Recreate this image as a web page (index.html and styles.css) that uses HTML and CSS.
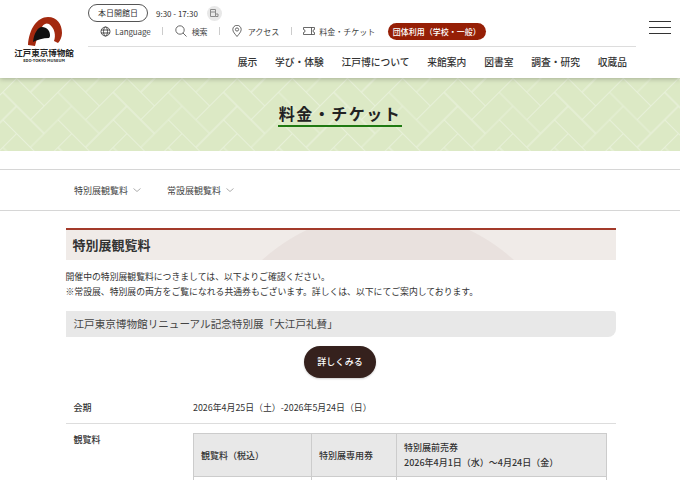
FILE: index.html
```html
<!DOCTYPE html>
<html lang="ja">
  <head>
    <meta charset="UTF-8" />
    <meta name="viewport" content="width=device-width, initial-scale=1.0" />
    <title>料金・チケット</title>
    <link rel="stylesheet" href="styles.css">
  </head>
  <body>
    <header class="site-header">
      <a class="logo">
        <svg class="logo-mark" width="36" height="30" viewBox="0 0 36 30">
          <path d="M1 29C2 13 10 1 21 1C30 1 35 8 35 17C35 21 33 25 31 27L27 25C29 20 28 12 22 8C16 5 12 14 8 30Z" fill="#a3290f" />
          <path d="M6 26C7 17 11 11 15 11C20 11 23 15 23 19C23 20 23 21 22 22C16 22 10 24 6 26Z" fill="#111" />
        </svg>
        <span class="logo-name">江戸東京博物館</span>
        <span class="logo-en">EDO-TOKYO MUSEUM</span>
      </a>
      <div class="header-main">
        <div class="status-row">
          <span class="open-pill">本日開館日</span>
          <span class="open-hours">9:30 - 17:30</span>
          <span class="calendar-icon">
            <svg width="10" height="10" viewBox="0 0 10 10" fill="none" stroke="#8a8a8a" stroke-width="1">
              <path d="M1.5 1.5h5v7h-5zM1.5 4h5M6.5 6h2.5v2.5h-2.5" />
            </svg>
          </span>
        </div>
        <div class="util-row">
          <a class="util-link util-en">
            <svg width="11" height="11" viewBox="0 0 11 11" fill="none" stroke="#333" stroke-width=".8">
              <circle cx="5.5" cy="5.5" r="4.5" />
              <ellipse cx="5.5" cy="5.5" rx="2" ry="4.5" />
              <path d="M1 4h9M1 7h9" />
            </svg>
            Language
          </a>
          <span class="util-sep"></span>
          <a class="util-link">
            <svg width="12" height="12" viewBox="0 0 12 12" fill="none" stroke="#444" stroke-width=".8">
              <circle cx="5" cy="5" r="4.2" />
              <path d="M8 8l3.5 3.5" />
            </svg>
            検索
          </a>
          <span class="util-sep"></span>
          <a class="util-link">
            <svg width="11" height="12" viewBox="0 0 11 12" fill="none" stroke="#444" stroke-width=".8">
              <path d="M5 11.5C3 9 .8 6.8.8 4.5a4.2 4.2 0 0 1 8.4 0C9.2 6.8 7 9 5 11.5z" />
              <circle cx="5" cy="4.5" r="1.6" />
            </svg>
            アクセス
          </a>
          <span class="util-sep"></span>
          <a class="util-link util-ticket">
            <svg width="12" height="8" viewBox="0 0 12 8" fill="none" stroke="#444" stroke-width=".8">
              <path d="M.5.5h11v2a1.5 1.5 0 0 0 0 3v2H.5v-2a1.5 1.5 0 0 0 0-3z" />
              <path d="M8.5.5v7" />
            </svg>
            料金・チケット
          </a>
          <a class="group-pill">団体利用（学校・一般）</a>
        </div>
        <nav class="global-nav">
          <a>展示</a>
          <a>学び・体験</a>
          <a>江戸博について</a>
          <a>来館案内</a>
          <a>図書室</a>
          <a>調査・研究</a>
          <a>収蔵品</a>
        </nav>
      </div>
      <button class="menu-button" aria-label="menu"><span></span><span></span><span></span></button>
    </header>

    <section class="hero">
      <svg class="hero-pattern" width="100%" height="100%">
        <defs>
          <pattern id="weave" width="4" height="4" patternUnits="userSpaceOnUse" patternTransform="translate(513 28) rotate(45) scale(19.5)">
            <path d="M0 0h2v1h-2zM1 1h2v1h-2zM2 2h2v1h-2zM3 3h2v1h-2zM-1 3h2v1h-2zM3 0h1v2h-1zM0 1h1v2h-1zM1 2h1v2h-1zM2 3h1v2h-1zM2 -1h1v2h-1z" fill="none" stroke="#e7f1d9" stroke-width=".05" />
          </pattern>
        </defs>
        <rect width="100%" height="100%" fill="url(#weave)" />
      </svg>
      <h1 class="hero-title">料金・チケット</h1>
    </section>

    <nav class="tabs">
      <a class="tab">特別展観覧料
        <svg width="8" height="4" viewBox="0 0 8 4" fill="none" stroke="#999" stroke-width=".8"><path d="M.5.5L4 3.5L7.5.5" /></svg>
      </a>
      <a class="tab">常設展観覧料
        <svg width="8" height="4" viewBox="0 0 8 4" fill="none" stroke="#999" stroke-width=".8"><path d="M.5.5L4 3.5L7.5.5" /></svg>
      </a>
    </nav>

    <main class="content">
      <h2 class="section-title">特別展観覧料</h2>
      <p class="lead">
        開催中の特別展観覧料につきましては、以下よりご確認ください。<br />
        ※常設展、特別展の両方をご覧になれる共通券もございます。詳しくは、以下にてご案内しております。
      </p>
      <h3 class="exhibit-title">江戸東京博物館リニューアル記念特別展「大江戸礼賛」</h3>
      <div class="more-wrap"><a class="more-button">詳しくみる</a></div>

      <div class="info-row info-row-period">
        <div class="info-label">会期</div>
        <div class="info-body">2026年4月25日（土）-2026年5月24日（日）</div>
      </div>
      <div class="info-row info-row-fee">
        <div class="info-label">観覧料</div>
        <table class="fee-table">
          <tr>
            <th class="col-kind">観覧料（税込）</th>
            <th class="col-ticket">特別展専用券</th>
            <th>特別展前売券<br />2026年4月1日（水）～4月24日（金）</th>
          </tr>
          <tr class="fee-row">
            <td></td>
            <td></td>
            <td></td>
          </tr>
        </table>
      </div>
    </main>
  </body>
</html>
```

FILE: styles.css
```css
html,
body {
  margin: 0;
  height: 480px;
  overflow: hidden;
}
body {
  font-family: "Noto Sans CJK JP", "Noto Sans", sans-serif;
  color: #333;
  background-color: #fff;
}
p,
h1,
h2,
h3 {
  margin: 0;
}

/* header */
.site-header {
  position: relative;
  z-index: 2;
  display: flex;
  height: 78px;
  background-color: #fff;
  box-shadow: 0 1px 5px rgba(0, 0, 0, 0.25);
}
.logo {
  display: flex;
  flex-direction: column;
  align-items: center;
  flex: none;
  width: 88px;
  padding-top: 16px;
  box-sizing: border-box;
}
.logo-mark {
  margin-left: 2px;
}
.logo-name {
  font-size: 8.5px;
  line-height: 10px;
  font-weight: 700;
  color: #222;
  margin-top: 1px;
}
.logo-en {
  font-size: 4px;
  line-height: 5px;
  margin-top: 1px;
  font-weight: 700;
  color: #222;
}
.header-main {
  width: 548px;
  flex: none;
}
.status-row {
  display: flex;
  align-items: center;
  height: 18px;
  margin-top: 4px;
}
.open-pill {
  width: 60px;
  height: 18px;
  line-height: 16px;
  box-sizing: border-box;
  border: 1px solid #555;
  border-radius: 9px;
  font-size: 8px;
  text-align: center;
}
.open-hours {
  font-size: 8px;
  margin-left: 8px;
}
.calendar-icon {
  display: flex;
  align-items: center;
  justify-content: center;
  width: 15px;
  height: 15px;
  margin-left: 9px;
  border-radius: 50%;
  background-color: #e8e8e8;
}
.util-row {
  display: flex;
  align-items: center;
  height: 14px;
  margin-top: 2px;
  padding-left: 12px;
  padding-bottom: 8px;
  border-bottom: 1px solid #ddd;
}
.util-link {
  display: flex;
  align-items: center;
  gap: 5px;
  font-size: 8px;
  color: #444;
}
.util-en {
  gap: 4px;
  letter-spacing: -0.1px;
}
.util-ticket {
  gap: 4px;
}
.util-sep {
  width: 1px;
  height: 8px;
  margin: 0 11.5px;
  background-color: #ccc;
}
.group-pill {
  width: 98px;
  height: 17px;
  line-height: 17px;
  margin-left: 12.5px;
  border-radius: 9px;
  background-color: #961f06;
  color: #fff;
  font-size: 8px;
  font-weight: 500;
  text-align: center;
}
.global-nav {
  display: flex;
  justify-content: flex-end;
  gap: 17.8px;
  padding-right: 9px;
  margin-top: 7px;
  font-size: 9.75px;
  line-height: 16px;
  font-weight: 500;
  color: #333;
}
.menu-button {
  position: absolute;
  top: 21px;
  left: 649px;
  display: flex;
  flex-direction: column;
  gap: 5px;
  width: 22px;
  padding: 0;
  border: none;
  background: none;
}
.menu-button span {
  display: block;
  height: 1px;
  background-color: #333;
}

/* hero */
.hero {
  position: relative;
  display: flex;
  justify-content: center;
  height: 73px;
  background-color: #dce9c5;
}
.hero-pattern {
  position: absolute;
  top: 0;
  left: 0;
}
.hero-title {
  position: relative;
  align-self: flex-start;
  margin-top: 24px;
  padding: 0 1px 1px;
  border-bottom: 2px solid #1f7a12;
  font-size: 16px;
  line-height: 22px;
  font-weight: 700;
  letter-spacing: 1.5px;
  color: #222;
}

/* tabs */
.tabs {
  display: flex;
  gap: 26px;
  height: 40px;
  margin-top: 18px;
  padding-left: 74px;
  align-items: center;
  border-top: 1px solid #d6d6d6;
  border-bottom: 1px solid #d6d6d6;
}
.tab {
  display: flex;
  align-items: center;
  gap: 5px;
  font-size: 9px;
  color: #444;
}

/* content */
.content {
  width: 550px;
  margin: 17px 0 0 65.5px;
}
.section-title {
  height: 30px;
  line-height: 29px;
  padding-left: 7px;
  border-top: 2px solid #a33a2a;
  background-color: #f0ebe8;
  background-image: radial-gradient(circle 188px at 322px 169px, #e9e1de 99.5%, transparent 100%);
  font-size: 13px;
  font-weight: 700;
  color: #333;
}
.lead {
  margin-top: 9px;
  font-size: 8.83px;
  line-height: 15px;
  color: #333;
}
.exhibit-title {
  height: 26px;
  line-height: 26px;
  margin-top: 12px;
  padding-left: 8px;
  border-radius: 0 3px 8px 0;
  background-color: #e8e8e8;
  font-size: 10.6px;
  font-weight: 400;
  color: #444;
}
.more-wrap {
  display: flex;
  justify-content: center;
  margin-top: 9px;
  padding-right: 1px;
}
.more-button {
  width: 72px;
  height: 32px;
  line-height: 32px;
  border-radius: 16px;
  background-color: #35211d;
  box-shadow: 0 1px 2px rgba(0, 0, 0, 0.2);
  color: #fff;
  font-size: 9px;
  font-weight: 500;
  text-align: center;
}
.info-row {
  display: flex;
}
.info-row-period {
  box-sizing: border-box;
  height: 46px;
  padding-top: 22px;
  border-bottom: 1px solid #ddd;
}
.info-row-fee {
  padding-top: 9px;
}
.info-label {
  width: 127.5px;
  flex: none;
  padding-left: 8px;
  box-sizing: border-box;
  font-size: 9px;
  line-height: 13px;
  font-weight: 500;
  color: #333;
}
.info-row-period .info-label {
  line-height: 15px;
}
.info-body {
  font-size: 8.9px;
  line-height: 15px;
  color: #333;
}
.fee-table {
  width: 414px;
  table-layout: fixed;
  border-collapse: collapse;
  font-size: 9px;
  color: #333;
}
.fee-table th,
.fee-table td {
  padding: 6px 7px;
  border: 1px solid #ccc;
  text-align: left;
  line-height: 15px;
}
.fee-table th {
  background-color: #e8e8e8;
  font-weight: 500;
}
.col-kind {
  width: 103px;
}
.col-ticket {
  width: 70px;
}
.fee-row td {
  height: 28px;
}
```
